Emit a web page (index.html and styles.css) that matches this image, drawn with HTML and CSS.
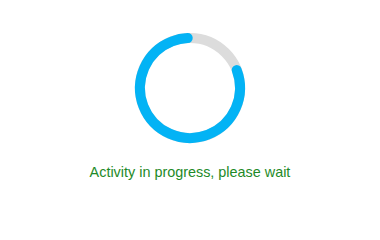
FILE: index.html
```html
<!DOCTYPE html>
<html>
<head>
<meta charset="utf-8">
<link rel="stylesheet" href="styles.css">
</head>
<body>
<div class="loader">
  <svg class="ring" width="120" height="120" viewBox="0 0 120 120">
    <circle cx="60" cy="60" r="50" fill="none" stroke="#dcdcdc" stroke-width="10"/>
    <circle cx="60" cy="60" r="50" fill="none" stroke="#03b3f5" stroke-width="10" stroke-linecap="round" stroke-dasharray="251.3 400" transform="rotate(-21 60 60)"/>
  </svg>
  <p class="msg">Activity in progress, please wait</p>
</div>
</body>
</html>
```
FILE: styles.css
```css
html, body {
  margin: 0;
  padding: 0;
  background: #ffffff;
}
.loader {
  width: 380px;
  height: 216px;
  display: flex;
  flex-direction: column;
  align-items: center;
  padding-top: 27.5px;
  box-sizing: border-box;
}
.ring {
  display: block;
  margin-left: -0.5px;
}
.msg {
  margin: 15.75px 0 0 0;
  font-family: "Liberation Sans", Arial, sans-serif;
  font-size: 14.4px;
  line-height: 18px;
  color: #1e8a28;
}
```
